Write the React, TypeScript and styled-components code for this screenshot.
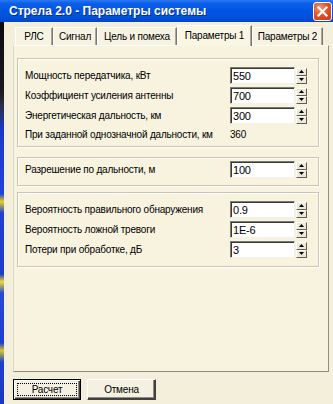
import React from 'react'
import styled, { createGlobalStyle } from 'styled-components'

const GlobalStyle = createGlobalStyle`
  *, *::before, *::after { box-sizing: border-box; }
  html, body { margin: 0; padding: 0; }
  body {
    width: 333px;
    height: 404px;
    overflow: hidden;
    background: #1c3cc8;
    font-family: "Liberation Sans", Arial, sans-serif;
    font-size: 10px;
    letter-spacing: -0.2px;
    color: #000;
  }
`

const Window = styled.div`
  display: flex;
  flex-direction: column;
  width: 333px;
  height: 404px;
`

const TitleBar = styled.div`
  flex: 0 0 22px;
  display: flex;
  align-items: center;
  justify-content: space-between;
  padding: 0 1px 0 9px;
  background: linear-gradient(
    180deg,
    #2a7bf2 0%,
    #0b5fe8 15%,
    #0055e4 45%,
    #0050dc 80%,
    #0046c8 100%
  );
`

const Title = styled.span`
  color: #fff;
  font-size: 12px;
  font-weight: bold;
  letter-spacing: 0;
  text-shadow: 1px 1px 0 #0a2c8c;
  white-space: nowrap;
`

const CloseButton = styled.div`
  width: 19px;
  height: 19px;
  display: flex;
  align-items: center;
  justify-content: center;
  border: 1px solid #fff;
  border-radius: 3px;
  background: radial-gradient(circle at 35% 30%, #f09a80 0%, #e0542a 45%, #c4381a 100%);
`

const Body = styled.div`
  flex: 1;
  display: flex;
  min-height: 0;
`

const DesktopStrip = styled.div`
  flex: 0 0 4px;
  background: linear-gradient(
    180deg,
    #0c0c10 0%,
    #1a1a1e 18%,
    #2b2f48 22%,
    #1b38c6 28%,
    #2244d8 45%,
    #e8d020 47%,
    #2040d0 50%,
    #1c3cc8 66%,
    #f0dc30 68%,
    #2848d4 71%,
    #1f3ed0 84%,
    #d8c828 86%,
    #2040cc 89%,
    #1a38c0 100%
  );
`

const Client = styled.div`
  flex: 1;
  display: flex;
  flex-direction: column;
  padding-left: 9px;
  background: #f3efda;
`

const TabStrip = styled.div`
  display: flex;
  align-items: flex-end;
  height: 23px;
  padding-left: 2px;
`

const Tab = styled.div<{ $active?: boolean; $w: number }>`
  position: relative;
  width: ${p => p.$w}px;
  height: ${p => (p.$active ? 21 : 18)}px;
  margin-bottom: ${p => (p.$active ? -1 : 0)}px;
  z-index: ${p => (p.$active ? 2 : 0)};
  display: flex;
  align-items: center;
  justify-content: center;
  padding-bottom: ${p => (p.$active ? 2 : 0)}px;
  background: ${p => (p.$active ? '#f9f6e4' : '#f6f3e2')};
  border-top: 1px solid #fff;
  border-left: 1px solid #fff;
  border-right: 1px solid #77756c;
  box-shadow: inset -1px 0 0 #aca899;
  white-space: nowrap;
`

const Panel = styled.div`
  width: 316px;
  height: 327px;
  display: flex;
  flex-direction: column;
  padding: 12px 9px 0 3px;
  background: #f7f3df;
  border: 1px solid;
  border-color: #fdfcf6 #8f8c80 #8f8c80 #dcd8c6;
`

const Group = styled.div<{ $h: number; $top: number; $pt: number }>`
  height: ${p => p.$h}px;
  margin-top: ${p => p.$top}px;
  padding: ${p => p.$pt}px 11px 0 7px;
  border: 1px solid #c9c5b2;
  box-shadow: inset 1px 1px 0 #fff, 1px 1px 0 #fff;
  display: flex;
  flex-direction: column;
  gap: 3px;
`

const Row = styled.div`
  height: 17px;
  display: flex;
  align-items: center;
`

const InfoRow = styled.div`
  height: 13px;
  margin-top: 1px;
  display: flex;
  align-items: center;
`

const Label = styled.span`
  flex: 1;
  white-space: nowrap;
`

const InfoValue = styled.span`
  width: 77px;
`

const Field = styled.div`
  width: 65px;
  height: 17px;
  display: flex;
  align-items: center;
  padding-left: 2px;
  font-size: 11px;
  background: #fff;
  border: 1px solid;
  border-color: #7a7a72 #f4f2e8 #f4f2e8 #7a7a72;
  box-shadow: inset 1px 1px 0 #3a3a36;
`

const Spinner = styled.div`
  width: 11px;
  height: 16px;
  margin-left: 1px;
  display: flex;
  flex-direction: column;
`

const SpinButton = styled.div`
  flex: 1;
  display: flex;
  align-items: center;
  justify-content: center;
  background: #ece9d8;
  border: 1px solid;
  border-color: #fff #5e5d56 #5e5d56 #fff;
`

const Footer = styled.div`
  display: flex;
  gap: 6px;
  margin-top: 7px;
`

const Button = styled.div<{ $default?: boolean; $w: number }>`
  position: relative;
  width: ${p => p.$w}px;
  height: 21px;
  display: flex;
  align-items: center;
  justify-content: center;
  background: #f4f1e3;
  border: 1px solid ${p => (p.$default ? '#000' : '#fff')};
  box-shadow: ${p =>
    p.$default
      ? 'inset 1px 1px 0 #fff, inset -1px -1px 0 #404040, inset -2px -2px 0 #8e8c82'
      : 'inset -1px -1px 0 #404040, inset -2px -2px 0 #8e8c82'};
  border-right-color: ${p => (p.$default ? '#000' : '#404040')};
  border-bottom-color: ${p => (p.$default ? '#000' : '#404040')};
`

const FocusRing = styled.div`
  position: absolute;
  inset: 3px;
  border: 1px dotted #000;
  pointer-events: none;
`

const Arrow = ({ up }: { up?: boolean }) => (
  <svg width="5" height="3" viewBox="0 0 5 3">
    <path d={up ? 'M2.5 0 L5 3 L0 3 Z' : 'M0 0 L5 0 L2.5 3 Z'} fill="#000" />
  </svg>
)

const Spin = () => (
  <Spinner>
    <SpinButton>
      <Arrow up />
    </SpinButton>
    <SpinButton>
      <Arrow />
    </SpinButton>
  </Spinner>
)

const InputRow = ({ label, value }: { label: string; value: string }) => (
  <Row>
    <Label>{label}</Label>
    <Field>{value}</Field>
    <Spin />
  </Row>
)

const tabs = [
  { title: 'РЛС', w: 38 },
  { title: 'Сигнал', w: 44 },
  { title: 'Цель и помеха', w: 80 },
  { title: 'Параметры 1', w: 75, active: true },
  { title: 'Параметры 2', w: 71 },
]

export default function App() {
  return (
    <Window>
      <GlobalStyle />
      <TitleBar>
        <Title>Стрела 2.0 - Параметры системы</Title>
        <CloseButton>
          <svg width="11" height="11" viewBox="0 0 11 11">
            <path d="M1.5 1.5 L9.5 9.5 M9.5 1.5 L1.5 9.5" stroke="#fff" strokeWidth="2.2" strokeLinecap="square" />
          </svg>
        </CloseButton>
      </TitleBar>
      <Body>
        <DesktopStrip />
        <Client>
          <TabStrip>
            {tabs.map(t => (
              <Tab key={t.title} $w={t.w} $active={t.active}>
                {t.title}
              </Tab>
            ))}
          </TabStrip>
          <Panel>
            <Group $h={89} $top={0} $pt={8}>
              <InputRow label="Мощность передатчика, кВт" value="550" />
              <InputRow label="Коэффициент усиления антенны" value="700" />
              <InputRow label="Энергетическая дальность, км" value="300" />
              <InfoRow>
                <Label>При заданной однозначной дальности, км</Label>
                <InfoValue>360</InfoValue>
              </InfoRow>
            </Group>
            <Group $h={29} $top={10} $pt={3}>
              <InputRow label="Разрешение по дальности, м" value="100" />
            </Group>
            <Group $h={75} $top={6} $pt={8}>
              <InputRow label="Вероятность правильного обнаружения" value="0.9" />
              <InputRow label="Вероятность ложной тревоги" value="1E-6" />
              <InputRow label="Потери при обработке, дБ" value="3" />
            </Group>
          </Panel>
          <Footer>
            <Button $default $w={68}>
              Расчет
              <FocusRing />
            </Button>
            <Button $w={69}>Отмена</Button>
          </Footer>
        </Client>
      </Body>
    </Window>
  )
}
